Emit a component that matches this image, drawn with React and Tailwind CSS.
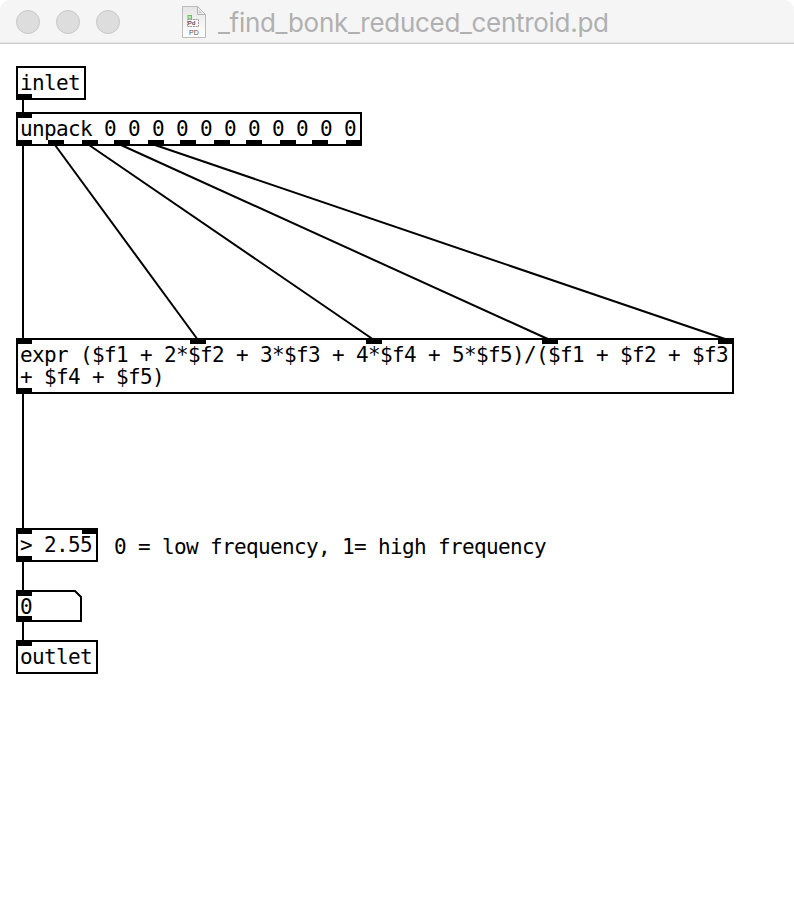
const MONO = "font-['DejaVu_Sans_Mono',monospace] text-[21px] leading-[22px] tracking-[-0.643px] whitespace-pre text-black";

// Inlets and outlets are the solid tabs on a box's top and bottom edges.
function Ports({ ins = [], outs = [] }) {
  return (
    <>
      {ins.map((x) => (
        <span key={"i" + x} className="absolute -top-0.5 h-1.5 w-4 bg-black" style={{ left: x - 2 }} />
      ))}
      {outs.map((x) => (
        <span key={"o" + x} className="absolute -bottom-0.5 h-1.5 w-4 bg-black" style={{ left: x - 2 }} />
      ))}
    </>
  );
}

function Box({ className, ins, outs, children }) {
  return (
    <div className={`absolute left-4 border-2 border-black bg-white pt-1 pl-0.5 ${MONO} ${className}`}>
      <Ports ins={ins} outs={outs} />
      <span className="relative">{children}</span>
    </div>
  );
}

const CORDS = [
  [23, 98, 23, 114],
  [23, 144, 23, 340],
  [55, 145, 198, 340],
  [89, 145, 374, 340],
  [121, 145, 550, 340],
  [155, 145, 728, 340],
  [23, 392, 23, 530],
  [23, 560, 23, 592],
  [23, 620, 23, 642],
];

function DocIcon() {
  return (
    <svg width="24" height="32" viewBox="0 0 24 32" className="shrink-0">
      <defs>
        <linearGradient id="page" x1="0" y1="0" x2="0" y2="1">
          <stop offset="0" stopColor="#e4e4e4" />
          <stop offset="0.65" stopColor="#f8f8f8" />
          <stop offset="1" stopColor="#fff" />
        </linearGradient>
      </defs>
      <path d="M0.5 0.5H15.5L23.5 8.5V31.5H0.5Z" fill="url(#page)" stroke="#bcbcbc" />
      <path d="M15.5 0.5V8.5H23.5Z" fill="#f8f8f8" stroke="#b4b4b4" />
      <path d="M16.5 7.5V3L21 7.5Z" fill="#d2d2d2" />
      <rect x="6" y="9.5" width="3.5" height="3.5" fill="#b5e8ae" stroke="#69bd62" />
      <path d="M5.5 13.5H16.5V20.5H5.5Z" fill="#fcfcfc" stroke="#999" strokeDasharray="2 0.7" />
      <text x="5.8" y="19.4" fontSize="6" fontWeight="bold" fill="#555" fontFamily="Liberation Sans, sans-serif">Pd</text>
      <text x="7" y="29.2" fontSize="7" fill="#555" fontFamily="Liberation Sans, sans-serif">PD</text>
    </svg>
  );
}

export default function App() {
  return (
    <div className="flex h-[918px] w-[794px] flex-col overflow-hidden bg-white">
      <header className="flex h-11 shrink-0 items-start rounded-t-[10px] border-b border-[#c9c9c9] bg-[#f5f5f5] pl-4 shadow-[inset_0_-1px_0_#e6e6e6]">
        <div className="flex gap-4 pt-2.5">
          <span className="size-6 rounded-full border border-[#c8c8c8] bg-[#dddddd]" />
          <span className="size-6 rounded-full border border-[#c8c8c8] bg-[#dddddd]" />
          <span className="size-6 rounded-full border border-[#c8c8c8] bg-[#dddddd]" />
        </div>
        <div className="ml-[62px] flex pt-1.5">
          <DocIcon />
          <h1 className="ml-3 pt-px font-['Inter',sans-serif] text-[26px] leading-8 tracking-[-0.3px] whitespace-nowrap text-[#b0b0b0]">
            _find_bonk_reduced_centroid.pd
          </h1>
        </div>
      </header>

      <main className="relative grow">
        <svg width="794" height="874" viewBox="0 44 794 874" className="pointer-events-none absolute top-0 left-0" stroke="#000" strokeWidth="2">
          {CORDS.map(([x1, y1, x2, y2], i) => (
            <line key={i} x1={x1} y1={y1} x2={x2} y2={y2} />
          ))}
        </svg>

        <Box className="top-[22px] h-[34px] w-[70px]" outs={[0]}>inlet</Box>
        <Box
          className="top-[68px] h-[34px] w-[346px]"
          ins={[0]}
          outs={[0, 32, 66, 98, 132, 164, 198, 230, 264, 296, 330]}
        >
          unpack 0 0 0 0 0 0 0 0 0 0 0
        </Box>
        <Box className="top-[294px] h-[56px] w-[718px]" ins={[0, 174, 350, 526, 702]} outs={[0]}>
          {"expr ($f1 + 2*$f2 + 3*$f3 + 4*$f4 + 5*$f5)/($f1 + $f2 + $f3\n+ $f4 + $f5)"}
        </Box>
        <Box className="top-[484px] h-[34px] w-[82px]" ins={[0, 66]} outs={[0]}>{"> 2.55"}</Box>
        <p className={`absolute top-[492px] left-[114px] ${MONO}`}>0 = low frequency, 1= high frequency</p>

        <div className={`absolute top-[546px] left-4 h-8 w-[66px] pt-1.5 pl-1 ${MONO}`}>
          <svg width="66" height="32" className="absolute top-0 left-0">
            <path d="M1 1H59L65 7V31H1Z" fill="#fff" stroke="#000" strokeWidth="2" />
            <path d="M0 0H16V6H0ZM0 26H16V32H0Z" />
          </svg>
          <span className="relative">0</span>
        </div>
        <Box className="top-[596px] h-[34px] w-[82px]" ins={[0]}>outlet</Box>
      </main>
    </div>
  );
}
